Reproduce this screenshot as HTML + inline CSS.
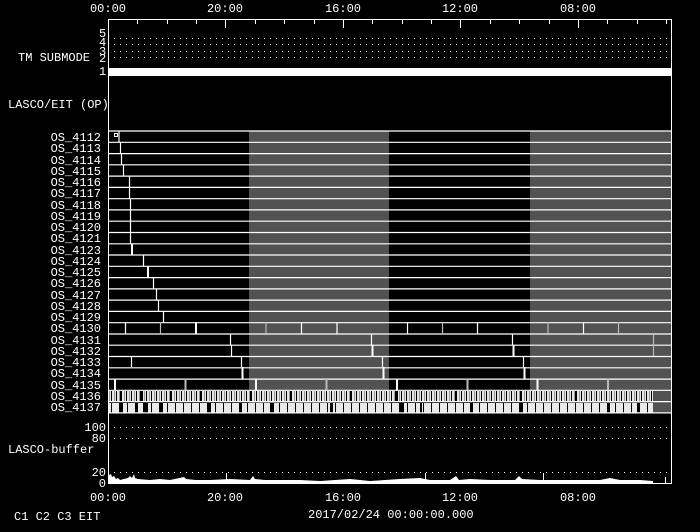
<!DOCTYPE html>
<html><head><style>
html,body{margin:0;padding:0;background:#000;}
svg{display:block}
text{font-family:"Liberation Mono",monospace;font-size:12px;fill:#fff}
</style></head><body>
<svg width="700" height="532" viewBox="0 0 700 532" xmlns="http://www.w3.org/2000/svg">
<defs>
<pattern id="p36" x="108" y="0" width="5" height="532" patternUnits="userSpaceOnUse">
<rect width="5" height="532" fill="#e6e6e6"/><rect x="1" width="1" height="532" fill="#999"/><rect x="3" width="1" height="532" fill="#000"/>
</pattern>
<pattern id="p37" x="108" y="0" width="8" height="532" patternUnits="userSpaceOnUse">
<rect width="8" height="532" fill="#eaeaea"/><rect x="3" width="1" height="532" fill="#000"/>
</pattern>
</defs>
<!-- gray bands -->
<rect x="249" y="131" width="140" height="282" fill="#525252"/>
<rect x="530" y="131" width="141" height="282" fill="#525252"/>
<!-- frame -->
<rect x="108.5" y="19.5" width="563" height="464" fill="none" stroke="#fff" stroke-width="1"/>
<!-- top ticks -->
<g stroke="#fff" stroke-width="1">
<line x1="137.5" y1="19" x2="137.5" y2="24"/><line x1="167.5" y1="19" x2="167.5" y2="24"/><line x1="196.5" y1="19" x2="196.5" y2="24"/><line x1="225.5" y1="19" x2="225.5" y2="28"/>
<line x1="255.5" y1="19" x2="255.5" y2="24"/><line x1="284.5" y1="19" x2="284.5" y2="24"/><line x1="314.5" y1="19" x2="314.5" y2="24"/><line x1="343.5" y1="19" x2="343.5" y2="28"/>
<line x1="372.5" y1="19" x2="372.5" y2="24"/><line x1="402.5" y1="19" x2="402.5" y2="24"/><line x1="431.5" y1="19" x2="431.5" y2="24"/><line x1="460.5" y1="19" x2="460.5" y2="28"/>
<line x1="490.5" y1="19" x2="490.5" y2="24"/><line x1="519.5" y1="19" x2="519.5" y2="24"/><line x1="549.5" y1="19" x2="549.5" y2="24"/><line x1="578.5" y1="19" x2="578.5" y2="28"/>
<line x1="607.5" y1="19" x2="607.5" y2="24"/><line x1="637.5" y1="19" x2="637.5" y2="24"/><line x1="666.5" y1="19" x2="666.5" y2="24"/>
</g>
<!-- dotted lines -->
<g stroke="#fff" stroke-width="1" stroke-dasharray="1 5">
<line x1="114" y1="38.5" x2="668" y2="38.5"/>
<line x1="114" y1="44.5" x2="668" y2="44.5"/>
<line x1="114" y1="51.5" x2="668" y2="51.5"/>
<line x1="114" y1="57.5" x2="668" y2="57.5"/>
<line x1="114" y1="427.5" x2="668" y2="427.5"/>
<line x1="114" y1="438.5" x2="668" y2="438.5"/>
<line x1="114" y1="472.5" x2="668" y2="472.5"/>
</g>
<rect x="109" y="68" width="562" height="8" fill="#fff"/>
<!-- labels top axis -->
<text x="108" y="12" text-anchor="middle">00:00</text>
<text x="225" y="12" text-anchor="middle">20:00</text>
<text x="343" y="12" text-anchor="middle">16:00</text>
<text x="460" y="12" text-anchor="middle">12:00</text>
<text x="578" y="12" text-anchor="middle">08:00</text>
<text x="18" y="61">TM SUBMODE</text>
<text x="99" y="37">5</text><text x="99" y="46">4</text><text x="99" y="55">3</text><text x="99" y="62">2</text><text x="99" y="75">1</text>
<text x="8" y="108">LASCO/EIT (OP)</text>
<g>
<text x="101" y="141" text-anchor="end">OS_4112</text>
<text x="101" y="152" text-anchor="end">OS_4113</text>
<text x="101" y="164" text-anchor="end">OS_4114</text>
<text x="101" y="175" text-anchor="end">OS_4115</text>
<text x="101" y="186" text-anchor="end">OS_4116</text>
<text x="101" y="197" text-anchor="end">OS_4117</text>
<text x="101" y="209" text-anchor="end">OS_4118</text>
<text x="101" y="220" text-anchor="end">OS_4119</text>
<text x="101" y="231" text-anchor="end">OS_4120</text>
<text x="101" y="242" text-anchor="end">OS_4121</text>
<text x="101" y="254" text-anchor="end">OS_4123</text>
<text x="101" y="265" text-anchor="end">OS_4124</text>
<text x="101" y="276" text-anchor="end">OS_4125</text>
<text x="101" y="287" text-anchor="end">OS_4126</text>
<text x="101" y="299" text-anchor="end">OS_4127</text>
<text x="101" y="310" text-anchor="end">OS_4128</text>
<text x="101" y="321" text-anchor="end">OS_4129</text>
<text x="101" y="332" text-anchor="end">OS_4130</text>
<text x="101" y="344" text-anchor="end">OS_4131</text>
<text x="101" y="355" text-anchor="end">OS_4132</text>
<text x="101" y="366" text-anchor="end">OS_4133</text>
<text x="101" y="377" text-anchor="end">OS_4134</text>
<text x="101" y="389" text-anchor="end">OS_4135</text>
<text x="101" y="400" text-anchor="end">OS_4136</text>
<text x="101" y="411" text-anchor="end">OS_4137</text>
</g>
<!-- barcode rows -->
<rect x="109" y="391" width="544" height="11" fill="url(#p36)"/>
<rect x="109" y="403" width="544" height="10" fill="url(#p37)"/>
<g fill="#000">
<rect x="120" y="391" width="2" height="11"/><rect x="140" y="391" width="3" height="11"/><rect x="170" y="391" width="2" height="11"/><rect x="200" y="391" width="2" height="11"/><rect x="250" y="391" width="2" height="11"/><rect x="290" y="391" width="2" height="11"/><rect x="350" y="391" width="2" height="11"/><rect x="395" y="391" width="3" height="11"/><rect x="455" y="391" width="2" height="11"/><rect x="520" y="391" width="2" height="11"/><rect x="575" y="391" width="2" height="11"/>
<rect x="120" y="403" width="3" height="10"/><rect x="136" y="403" width="2" height="10"/><rect x="144" y="403" width="4" height="10"/><rect x="160" y="403" width="3" height="10"/><rect x="208" y="403" width="3" height="10"/><rect x="240" y="403" width="2" height="10"/><rect x="270" y="403" width="4" height="10"/><rect x="330" y="403" width="3" height="10"/><rect x="400" y="403" width="4" height="10"/><rect x="420" y="403" width="2" height="10"/><rect x="470" y="403" width="3" height="10"/><rect x="520" y="403" width="3" height="10"/><rect x="607" y="403" width="3" height="10"/><rect x="637" y="403" width="2" height="10"/>
</g>
<g stroke="#fff" stroke-width="1.2">
<line x1="108" y1="131" x2="671" y2="131"/><line x1="108" y1="142.3" x2="671" y2="142.3"/><line x1="108" y1="153.6" x2="671" y2="153.6"/><line x1="108" y1="164.8" x2="671" y2="164.8"/><line x1="108" y1="176.1" x2="671" y2="176.1"/><line x1="108" y1="187.4" x2="671" y2="187.4"/><line x1="108" y1="198.7" x2="671" y2="198.7"/><line x1="108" y1="209.9" x2="671" y2="209.9"/><line x1="108" y1="221.2" x2="671" y2="221.2"/><line x1="108" y1="232.5" x2="671" y2="232.5"/><line x1="108" y1="243.8" x2="671" y2="243.8"/><line x1="108" y1="255" x2="671" y2="255"/><line x1="108" y1="266.3" x2="671" y2="266.3"/><line x1="108" y1="277.6" x2="671" y2="277.6"/><line x1="108" y1="288.9" x2="671" y2="288.9"/><line x1="108" y1="300.1" x2="671" y2="300.1"/><line x1="108" y1="311.4" x2="671" y2="311.4"/><line x1="108" y1="322.7" x2="671" y2="322.7"/><line x1="108" y1="334" x2="671" y2="334"/><line x1="108" y1="345.2" x2="671" y2="345.2"/><line x1="108" y1="356.5" x2="671" y2="356.5"/><line x1="108" y1="367.8" x2="671" y2="367.8"/><line x1="108" y1="379.1" x2="671" y2="379.1"/><line x1="108" y1="390.3" x2="671" y2="390.3"/><line x1="108" y1="401.6" x2="671" y2="401.6"/><line x1="108" y1="412.9" x2="671" y2="412.9"/>
<line x1="119" y1="131" x2="119" y2="142"/><line x1="120.5" y1="142" x2="120.5" y2="154"/><line x1="121.5" y1="154" x2="121.5" y2="165"/><line x1="123.5" y1="165" x2="123.5" y2="176"/>
<line x1="129.5" y1="176" x2="129.5" y2="187"/><line x1="129.5" y1="187" x2="129.5" y2="199"/><line x1="130.5" y1="199" x2="130.5" y2="210"/><line x1="130.5" y1="210" x2="130.5" y2="221"/><line x1="130.5" y1="221" x2="130.5" y2="232"/><line x1="130.5" y1="232" x2="130.5" y2="244"/>
<line x1="132" y1="244" x2="132" y2="255" stroke-width="2"/><line x1="143.5" y1="255" x2="143.5" y2="266"/><line x1="148" y1="266" x2="148" y2="277" stroke-width="2"/><line x1="153.5" y1="277" x2="153.5" y2="289"/><line x1="156.5" y1="289" x2="156.5" y2="300"/><line x1="158.5" y1="300" x2="158.5" y2="311"/><line x1="163.5" y1="311" x2="163.5" y2="322"/>
<line x1="125.5" y1="322" x2="125.5" y2="334"/><line x1="160.5" y1="322" x2="160.5" y2="334" stroke="#bbb"/><line x1="196" y1="322" x2="196" y2="334" stroke-width="2"/><line x1="266" y1="322" x2="266" y2="334" stroke="#bbb"/><line x1="301.5" y1="322" x2="301.5" y2="334"/><line x1="337" y1="322" x2="337" y2="334"/><line x1="407.5" y1="322" x2="407.5" y2="334"/><line x1="442.5" y1="322" x2="442.5" y2="334" stroke="#bbb"/><line x1="477.5" y1="322" x2="477.5" y2="334"/><line x1="548" y1="322" x2="548" y2="334" stroke="#bbb"/><line x1="583.5" y1="322" x2="583.5" y2="334"/><line x1="618.5" y1="322" x2="618.5" y2="334" stroke="#bbb"/>
<line x1="230.5" y1="334" x2="230.5" y2="345"/><line x1="371.5" y1="334" x2="371.5" y2="345"/><line x1="512.5" y1="334" x2="512.5" y2="345"/><line x1="653.5" y1="334" x2="653.5" y2="345" stroke="#bbb"/>
<line x1="231.5" y1="345" x2="231.5" y2="356"/><line x1="372.5" y1="345" x2="372.5" y2="356" stroke-width="2"/><line x1="513.5" y1="345" x2="513.5" y2="356" stroke-width="2"/><line x1="653.5" y1="345" x2="653.5" y2="356" stroke="#bbb"/>
<line x1="131.5" y1="356" x2="131.5" y2="367"/><line x1="241.5" y1="356" x2="241.5" y2="367"/><line x1="382.5" y1="356" x2="382.5" y2="367"/><line x1="523.5" y1="356" x2="523.5" y2="367"/>
<line x1="242.5" y1="367" x2="242.5" y2="379" stroke-width="2"/><line x1="383.5" y1="367" x2="383.5" y2="379" stroke-width="2"/><line x1="524.5" y1="367" x2="524.5" y2="379" stroke-width="2"/>
<line x1="115" y1="379" x2="115" y2="390" stroke-width="2"/><line x1="185.5" y1="379" x2="185.5" y2="390" stroke="#bbb" stroke-width="2"/><line x1="256" y1="379" x2="256" y2="390" stroke-width="2"/><line x1="326.5" y1="379" x2="326.5" y2="390" stroke="#bbb" stroke-width="2"/><line x1="397" y1="379" x2="397" y2="390" stroke-width="2"/><line x1="467.5" y1="379" x2="467.5" y2="390" stroke="#bbb" stroke-width="2"/><line x1="537.5" y1="379" x2="537.5" y2="390" stroke-width="2"/><line x1="608" y1="379" x2="608" y2="390" stroke="#bbb" stroke-width="2"/>
</g>
<rect x="114.5" y="133.5" width="3" height="3" fill="none" stroke="#fff" stroke-width="1"/>
<!-- buffer -->
<text x="106" y="431" text-anchor="end">100</text>
<text x="106" y="442" text-anchor="end">80</text>
<text x="8" y="453">LASCO-buffer</text>
<text x="106" y="476" text-anchor="end">20</text>
<text x="106" y="487" text-anchor="end">0</text>
<polygon fill="#fff" points="109,483 109,475 111,474 112,477 114,476 116,479 118,478 120,480 124,479 128,478 130,476 132,478 134,474 135,478 138,479 150,480 160,479 170,480 184,477 186,479 196,480 210,480 230,479 250,480 253,476 255,479 265,480 300,480 320,481 350,479 370,481 400,479 420,478 430,480 450,480 456,476 459,480 470,479 490,480 515,480 519,476 522,479 540,480 560,480 580,480 590,480 600,480 610,478 620,480 640,480 653,481 653,483"/>
<g stroke="#fff" stroke-width="1"><line x1="226.5" y1="473" x2="226.5" y2="483"/><line x1="425.5" y1="473" x2="425.5" y2="483"/><line x1="543.5" y1="473" x2="543.5" y2="483"/><line x1="665.5" y1="477" x2="665.5" y2="483"/></g>
<!-- bottom axis -->
<text x="108" y="501" text-anchor="middle">00:00</text>
<text x="225" y="501" text-anchor="middle">20:00</text>
<text x="343" y="501" text-anchor="middle">16:00</text>
<text x="460" y="501" text-anchor="middle">12:00</text>
<text x="578" y="501" text-anchor="middle">08:00</text>
<text x="308" y="518">2017/02/24 00:00:00.000</text>
<text x="14" y="520" font-size="11">C1  C2  C3  EIT</text>
</svg>
</body></html>
